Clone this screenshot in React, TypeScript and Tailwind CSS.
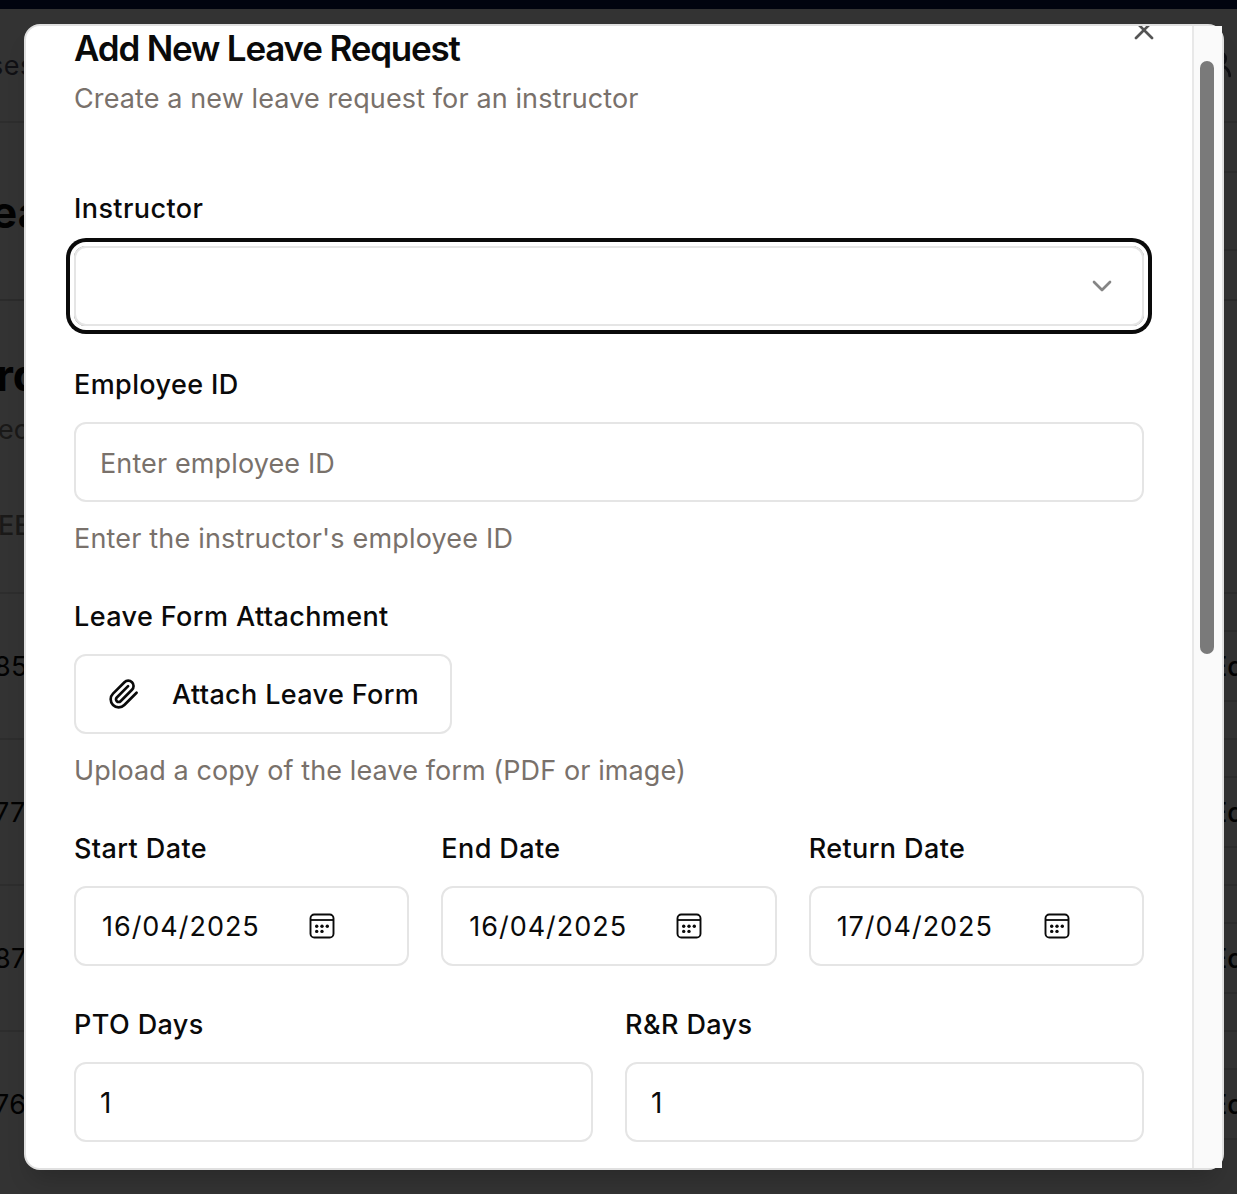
import type { ReactNode } from "react";
import { ChevronDown, UserRound, X } from "lucide-react";

function Label({ children }: { children: ReactNode }) {
  return (
    <div className="mb-[23px] box-content h-7 translate-y-px pb-px text-[27px] leading-7 font-medium tracking-[0.4px] whitespace-nowrap">
      {children}
    </div>
  );
}

function PaperclipIcon() {
  return (
    <svg
      className="size-8 shrink-0"
      viewBox="0 0 24 24"
      fill="none"
      stroke="currentColor"
      strokeWidth="2"
      strokeLinecap="round"
      strokeLinejoin="round"
    >
      <path d="m21.44 11.05-9.19 9.19a6 6 0 0 1-8.49-8.49l8.57-8.57A4 4 0 1 1 18 8.84l-8.59 8.57a2 2 0 0 1-2.83-2.83l8.49-8.48" />
    </svg>
  );
}

function CalendarIcon() {
  return (
    <svg width="26" height="26" viewBox="0 0 26 26" fill="none" stroke="#0a0a0a">
      <rect x="1.5" y="1.5" width="23" height="23" rx="3.8" strokeWidth="1.9" />
      <path d="M1.5 7h23" strokeWidth="1.8" />
      <g fill="#0a0a0a" stroke="none">
        <circle cx="7.7" cy="13.2" r="1.7" />
        <circle cx="13" cy="13.2" r="1.7" />
        <circle cx="18.3" cy="13.2" r="1.7" />
        <circle cx="7.7" cy="18.4" r="1.7" />
        <circle cx="13" cy="18.4" r="1.7" />
      </g>
    </svg>
  );
}

function DateField({ label, value }: { label: string; value: string }) {
  return (
    <div>
      <Label>{label}</Label>
      <div className="flex h-20 items-center rounded-xl border-2 border-[#e5e5e5] pl-[26px] text-[27px]">
        <span className="w-[207px] pt-0.5 tracking-[0.97px]">{value}</span>
        <CalendarIcon />
      </div>
    </div>
  );
}

function NumberField({ label, value }: { label: string; value: string }) {
  return (
    <div>
      <Label>{label}</Label>
      <div className="flex h-20 items-center rounded-xl border-2 border-[#e5e5e5] pt-0.5 pl-6 text-[28px]">
        {value}
      </div>
    </div>
  );
}

function BackgroundRow({ id }: { id: string }) {
  return (
    <div className="flex h-[146px] items-center justify-between border-t-2 border-[#2d2d2d]">
      <span className="-ml-1.5 pt-0.5 text-[27px] tracking-[0.3px]">{id}</span>
      <div className="-mr-24 flex h-[72px] w-[130px] items-center border-y-2 border-[#2d2d2d] pt-0.5 pl-2 text-[27px] font-medium">
        Edit
      </div>
    </div>
  );
}

function BackgroundPage() {
  return (
    <div className="absolute inset-0 overflow-hidden bg-[#333333] text-[#020202]">
      <div className="h-[9px] bg-[#01040f]" />
      <div className="flex h-[114px] items-center justify-between border-b-2 border-[#2d2d2d] text-[#101014]">
        <span className="-ml-[11px] pt-0.5 text-[27px] tracking-[0.5px]">ses</span>
        <UserRound className="-mt-0.5 mr-0.5 size-8" strokeWidth={2} />
      </div>
      <div className="flex h-[176px] items-center justify-between">
        <span className="-ml-[9px] pt-0.5 text-[44px] font-bold">ea</span>
        <div className="h-20 w-10 border-y-2 border-[#2d2d2d]" />
      </div>
      <div className="h-[293px] border-t-2 border-[#2b2b2b]">
        <div className="-ml-1 pt-[46px] text-[44px] leading-[56px] font-bold">rd</div>
        <div className="mt-[7px] -ml-0.5 text-[27px] leading-10 text-[#1a1918]">ec</div>
        <div className="mt-14 -ml-0.5 text-[27px] leading-10 font-medium text-[#1a1918]">EE</div>
      </div>
      <BackgroundRow id="85" />
      <BackgroundRow id="77" />
      <BackgroundRow id="87" />
      <BackgroundRow id="76" />
    </div>
  );
}

export default function App() {
  return (
    <div className="relative h-[1194px] w-[1237px] overflow-hidden px-6 pt-6 font-['Inter',sans-serif] text-[#0a0a0a]">
      <BackgroundPage />
      <div className="relative flex h-[1146px] w-[1200px] rounded-2xl border-2 border-[#e0e0e0] bg-white shadow-[0_16px_24px_-8px_rgba(0,0,0,0.2)]">
        <div className="relative w-[1166px] overflow-hidden px-12 pt-1">
          <X className="absolute -top-3 right-8 size-8 text-[#545454]" strokeWidth={2} />
          <h1 className="h-9 whitespace-nowrap text-[35px] leading-9 font-semibold tracking-[-1.19px]">
            Add New Leave Request
          </h1>
          <p className="mt-[13px] mb-[75px] h-10 whitespace-nowrap text-[27px] leading-10 tracking-[0.11px] text-[#79716b]">
            Create a new leave request for an instructor
          </p>
          <div className="flex flex-col gap-11">
            <div>
              <Label>Instructor</Label>
              <div className="flex h-20 items-center justify-end rounded-xl border-2 border-[#e5e5e5] pr-6 ring-4 ring-[#0a0a0a] ring-offset-4 ring-offset-white">
                <ChevronDown className="size-8 text-[#858585]" strokeWidth={2} />
              </div>
            </div>
            <div>
              <Label>Employee ID</Label>
              <div className="flex h-20 items-center rounded-xl border-2 border-[#e5e5e5] pt-1 pl-6 text-[27px] tracking-[0.12px] text-[#79716b]">
                Enter employee ID
              </div>
              <p className="mt-[17px] -mb-px h-10 whitespace-nowrap text-[27px] leading-10 tracking-[0.18px] text-[#79716b]">
                Enter the instructor's employee ID
              </p>
            </div>
            <div>
              <Label>Leave Form Attachment</Label>
              <div className="flex h-20 w-[378px] items-center gap-8 rounded-xl border-2 border-[#e5e5e5] pl-8 text-[27px] font-medium whitespace-nowrap tracking-[0.36px]">
                <PaperclipIcon />
                <span className="pt-0.5">Attach Leave Form</span>
              </div>
              <p className="mt-[17px] -mb-px h-10 whitespace-nowrap text-[27px] leading-10 tracking-[0.09px] text-[#79716b]">
                Upload a copy of the leave form (PDF or image)
              </p>
            </div>
            <div className="grid grid-cols-3 gap-8">
              <DateField label="Start Date" value="16/04/2025" />
              <DateField label="End Date" value="16/04/2025" />
              <DateField label="Return Date" value="17/04/2025" />
            </div>
            <div className="grid grid-cols-2 gap-8">
              <NumberField label="PTO Days" value="1" />
              <NumberField label="R&R Days" value="1" />
            </div>
          </div>
        </div>
        <div className="w-[30px] border-l-2 border-[#e8e8e8] bg-[#fafafa] pt-[35px] pl-1.5">
          <div className="h-[593px] w-3.5 rounded-full bg-[#7a7a7a]" />
        </div>
      </div>
    </div>
  );
}
